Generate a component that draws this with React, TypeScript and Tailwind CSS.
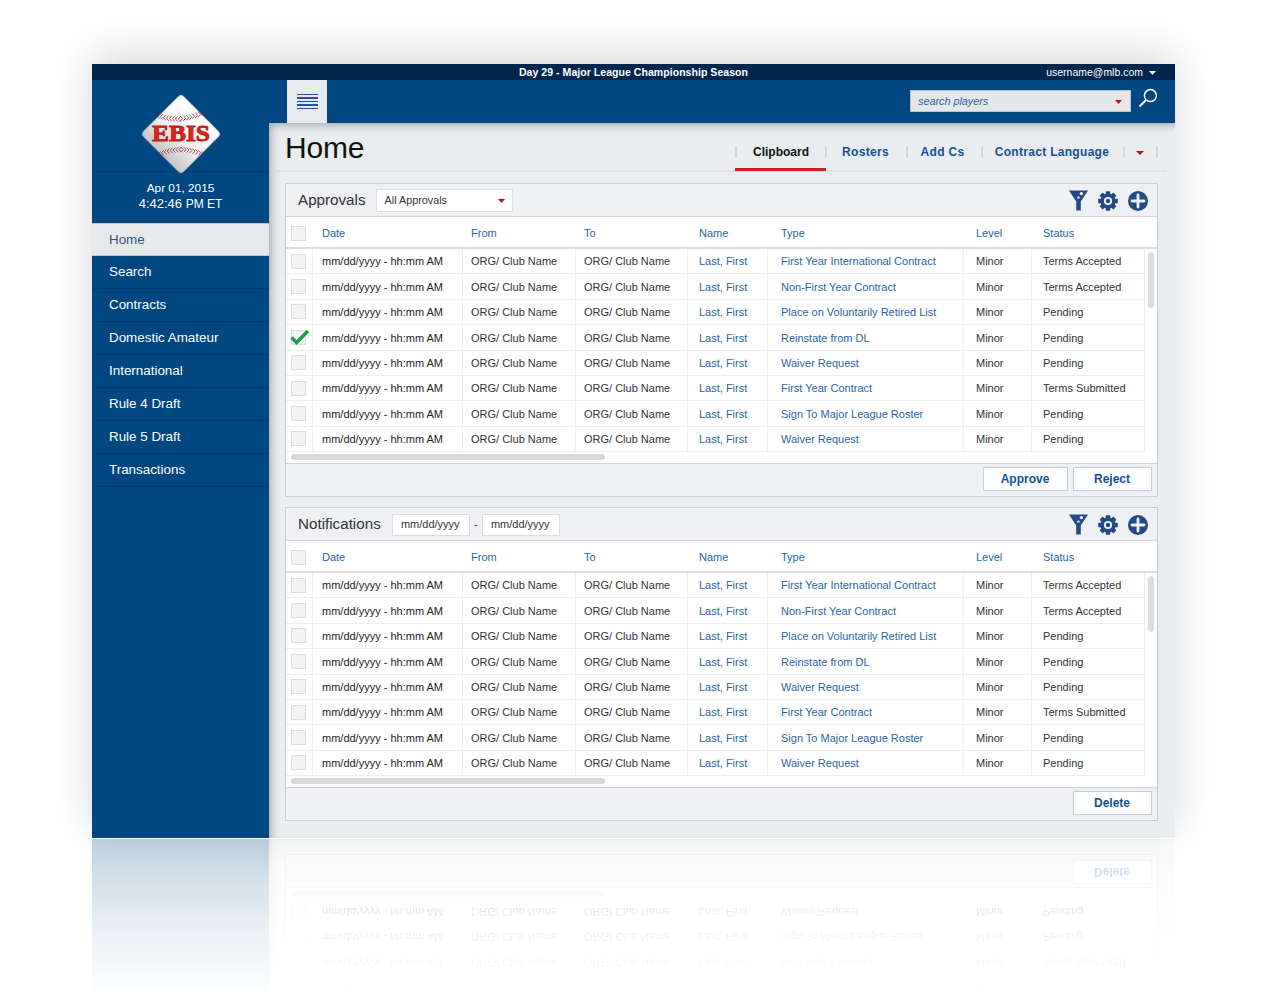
import React from "react";

const FONT = "[font-family:'Liberation_Sans',Arial,sans-serif]";

const rows: [string, string, string][] = [
  ["First Year International Contract", "Minor", "Terms Accepted"],
  ["Non-First Year Contract", "Minor", "Terms Accepted"],
  ["Place on Voluntarily Retired List", "Minor", "Pending"],
  ["Reinstate from DL", "Minor", "Pending"],
  ["Waiver Request", "Minor", "Pending"],
  ["First Year Contract", "Minor", "Terms Submitted"],
  ["Sign To Major League Roster", "Minor", "Pending"],
  ["Waiver Request", "Minor", "Pending"],
];

const GRID = "grid grid-cols-[26px_150px_113px_112px_80px_196px_68px_114px]";

function stitches(x0: number, cy: number, x1: number, y0: number, y1: number) {
  const out: React.ReactElement[] = [];
  const n = 16;
  for (let i = 0; i < n; i++) {
    const t = i / (n - 1);
    const x = x0 + (x1 - x0) * t;
    const y = (1 - t) * (1 - t) * y0 + 2 * t * (1 - t) * cy + t * t * y1;
    const dir = t < 0.5 ? -1 : 1;
    out.push(
      <path
        key={i}
        d={`M${x - 1.7 * dir} ${y - 2.6} L${x + 0.6 * dir} ${y} L${x - 1.7 * dir} ${y + 2.6}`}
        fill="none"
        stroke="#96283a"
        strokeWidth="0.8"
      />
    );
  }
  return out;
}

function Logo() {
  return (
    <svg width="84" height="84" viewBox="0 0 84 84" className="block">
      <defs>
        <linearGradient id="ebisd" x1="0" y1="0" x2="0" y2="1">
          <stop offset="0" stopColor="#ffffff" />
          <stop offset="0.55" stopColor="#f1f1f1" />
          <stop offset="1" stopColor="#c4c4c4" />
        </linearGradient>
      </defs>
      <g transform="rotate(45 42 42)">
        <rect x="13.5" y="13.5" width="57" height="57" rx="4" fill="url(#ebisd)" stroke="#8da4bb" strokeWidth="0.6" />
      </g>
      {stitches(19, 31, 64, 24, 21)}
      {stitches(20, 53, 64, 62, 62)}
      <text
        x="42"
        y="49"
        textAnchor="middle"
        textLength="58"
        lengthAdjust="spacingAndGlyphs"
        fontFamily="'Liberation Serif', serif"
        fontWeight="700"
        fontSize="24"
        fill="#e0261a"
        stroke="#b81d13"
        strokeWidth="0.9"
      >
        EBIS
      </text>
    </svg>
  );
}

function Funnel() {
  return (
    <svg width="19" height="21" viewBox="0 0 19 21" className="block">
      <path d="M0 0.5 H19 L11.8 11.5 V20.5 H7.2 V11.5 Z" fill="#234a85" />
      <circle cx="12.4" cy="3.6" r="1.7" fill="#eef0f3" />
      <circle cx="9.4" cy="7.6" r="1.2" fill="#eef0f3" />
    </svg>
  );
}

function Gear() {
  const teeth = [0, 45, 90, 135];
  return (
    <svg width="20" height="20" viewBox="0 0 20 20" className="block">
      {teeth.map((a) => (
        <rect key={a} x="7.7" y="0.2" width="4.6" height="19.6" rx="0.8" fill="#234a85" transform={`rotate(${a} 10 10)`} />
      ))}
      <circle cx="10" cy="10" r="7.6" fill="#234a85" />
      <circle cx="10" cy="10" r="4.1" fill="#eef0f3" />
      <circle cx="10" cy="10" r="2.2" fill="#234a85" />
    </svg>
  );
}

function PlusCircle() {
  return (
    <svg width="20" height="20" viewBox="0 0 20 20" className="block">
      <circle cx="10" cy="10" r="10" fill="#234a85" />
      <path d="M10 4 V16 M4 10 H16" stroke="#eef0f3" strokeWidth="2.8" strokeLinecap="round" />
    </svg>
  );
}

function Caret({ color = "#c8100f", w = 8, h = 4 }: { color?: string; w?: number; h?: number }) {
  return (
    <svg width={w} height={h} viewBox="0 0 8 4" className="block" preserveAspectRatio="none">
      <path d="M0 0 H8 L4 4 Z" fill={color} />
    </svg>
  );
}

function Checkbox({ checked }: { checked?: boolean }) {
  return (
    <div className="relative h-[15px] w-[15px] border border-[#dcdddf] bg-[#f1f2f3]">
      {checked && (
        <svg width="20" height="16" viewBox="0 0 20 16" className="absolute -top-[2px] -left-[2px]">
          <path d="M1.5 8.5 L6.5 13.5 L18 2" fill="none" stroke="#16a04a" strokeWidth="3.4" />
        </svg>
      )}
    </div>
  );
}

function Table({ checkedRow }: { checkedRow?: number }) {
  const heads = ["Date", "From", "To", "Name", "Type", "Level", "Status"];
  const headPads = ["pl-[10px]", "pl-[9px]", "pl-[9px]", "pl-[12px]", "pl-[14px]", "pl-[13px]", "pl-[12px]"];
  const pads = ["pl-[9px]", "pl-[8px]", "pl-[8px]", "pl-[11px]", "pl-[13px]", "pl-[12px]", "pl-[11px]"];
  const cell = "flex items-center border-l border-[#eeeeee] pt-[1px] whitespace-nowrap";
  return (
    <div className="relative bg-white">
      <div className={`${GRID} h-[32px] items-center border-b-2 border-[#dddee0] pt-[2px] text-[11px] text-[#2a63a8]`}>
        <div className="pl-[5px]">
          <Checkbox />
        </div>
        {heads.map((h, i) => (
          <div key={h} className={headPads[i]}>
            {h}
          </div>
        ))}
      </div>
      <div className="h-[203px] w-[859px]">
        {rows.map((r, i) => (
          <div key={i} className={`${GRID} h-[25.4px] border-r border-b border-[#eeeeee] text-[11px]`}>
            <div className="flex items-center pl-[5px]">
              <Checkbox checked={checkedRow === i} />
            </div>
            <div className={`${cell} ${pads[0]} text-[#222222]`}>mm/dd/yyyy - hh:mm AM</div>
            <div className={`${cell} ${pads[1]} text-[#333333]`}>ORG/ Club Name</div>
            <div className={`${cell} ${pads[2]} text-[#333333]`}>ORG/ Club Name</div>
            <div className={`${cell} ${pads[3]} text-[#2a63a8]`}>Last, First</div>
            <div className={`${cell} ${pads[4]} text-[#2a63a8]`}>{r[0]}</div>
            <div className={`${cell} ${pads[5]} text-[#333333]`}>{r[1]}</div>
            <div className={`${cell} ${pads[6]} text-[#333333]`}>{r[2]}</div>
          </div>
        ))}
      </div>
      <div className="flex h-[11px] items-start pt-[2px] pl-[5px]">
        <div className="h-[6px] w-[314px] rounded-full bg-[#d9d9d9]" />
      </div>
      <div className="absolute top-[35px] right-[3px] h-[56px] w-[6px] rounded-full bg-[#dcdcdc]" />
    </div>
  );
}

function FooterButton({ label, w }: { label: string; w: string }) {
  return (
    <button className={`h-[24px] ${w} border border-[#bcd3e6] bg-white pr-[1px] text-[12px] font-bold text-[#12509a]`}>
      {label}
    </button>
  );
}

function Panel({ title, control, buttons, checkedRow }: { title: string; control: React.ReactNode; buttons: React.ReactNode; checkedRow?: number }) {
  return (
    <div className="h-[314px] w-[873px] border border-[#c9ccd0] bg-[#eef0f3]">
      <div className="flex h-[33px] items-center border-b border-[#d6d8db] pt-[1px] pl-[12px]">
        <div className="mr-[10px] text-[15.2px] text-[#333333]">{title}</div>
        {control}
        <div className="ml-auto flex items-center gap-[10px] pr-[9px]">
          <Funnel />
          <Gear />
          <PlusCircle />
        </div>
      </div>
      <Table checkedRow={checkedRow} />
      <div className="flex h-[33px] items-center justify-end gap-[5px] border-t border-[#d3d5d8] pr-[5px] pb-[2px]">{buttons}</div>
    </div>
  );
}

const navItems = ["Search", "Contracts", "Domestic Amateur", "International", "Rule 4 Draft", "Rule 5 Draft", "Transactions"];

function Sidebar() {
  return (
    <div className="flex w-[177px] shrink-0 flex-col bg-[#004782] text-white">
      <div className="flex h-[92px] justify-center border-b border-[#003c70] pt-[12px]">
        <Logo />
      </div>
      <div className="flex h-[51px] flex-col items-center pt-[8px] text-center">
        <div className="text-[11.8px] leading-[16px]">Apr 01, 2015</div>
        <div className="text-[13px] leading-[15px]">
          4:42:46 <span className="text-[12px]">PM ET</span>
        </div>
      </div>
      <div className="flex h-[33px] items-center border-y border-[#b9c4cf] bg-[#e7e8ea] pl-[17px] text-[13.4px] leading-[16px] text-[#33557d]">Home</div>
      {navItems.map((n) => (
        <div key={n} className="flex h-[33px] items-center border-b border-[#003c70] pl-[17px] text-[13.4px] text-white">
          {n}
        </div>
      ))}
    </div>
  );
}

function Tabs() {
  const tabs = [
    ["Clipboard", "w-[88px] tracking-[0px]"],
    ["Rosters", "w-[79px] pr-[2px] tracking-[0.3px]"],
    ["Add Cs", "w-[73px] pr-[4px] tracking-[0.3px]"],
    ["Contract Language", "w-[140px] pr-[2px] tracking-[0.3px]"],
  ];
  const Sep = () => <div className="mt-[3px] h-[12px] w-[2px] bg-[#d3d7db]" />;
  return (
    <div className="flex items-center pt-[7px]">
      <Sep />
      {tabs.map(([t, w], i) => (
        <React.Fragment key={t}>
          <div className={`relative flex h-[16px] ${w} items-center justify-center pt-[3px] text-[12px] font-bold ${i === 0 ? "text-[#111111]" : "text-[#12509a]"}`}>
            {t}
            {i === 0 && <div className="absolute -left-[2px] top-[26px] h-[3px] w-[91px] bg-[#c8261f]" />}
          </div>
          <Sep />
        </React.Fragment>
      ))}
      <div className="flex h-[16px] w-[31px] items-center justify-center pt-[5px] pr-[2px]">
        <Caret />
      </div>
      <Sep />
    </div>
  );
}

function Content() {
  return (
    <div className="flex-1 bg-[#e9edf0] pr-[17px] pl-[16px] shadow-[inset_9px_9px_9px_-7px_rgba(0,0,0,0.3)]">
      <div className="-mr-[9px] -ml-[8px] flex h-[49px] items-center justify-between border-b-2 border-[#dde1e4] pr-[9px] pl-[8px]">
        <div className="pt-[2px] text-[30px] leading-none tracking-[-0.2px] text-[#111111]">Home</div>
        <Tabs />
      </div>
      <div className="mt-[11px] flex flex-col gap-[10px]">
        <Panel
          title="Approvals"
          checkedRow={3}
          control={
            <div className="flex h-[23px] w-[137px] items-center justify-between border border-[#dcdfe2] bg-white pr-[7px] pl-[8px] text-[10.8px] text-[#333333]">
              All Approvals
              <Caret w={7} h={4} />
            </div>
          }
          buttons={
            <>
              <FooterButton label="Approve" w="w-[85px]" />
              <FooterButton label="Reject" w="w-[79px]" />
            </>
          }
        />
        <Panel
          title="Notifications"
          control={
            <div className="ml-[1px] flex items-center text-[11px] text-[#333333]">
              <div className="flex h-[22px] w-[78px] items-center justify-center border border-[#dcdfe2] bg-white pr-[1px]">mm/dd/yyyy</div>
              <div className="w-[12px] text-center">-</div>
              <div className="flex h-[22px] w-[78px] items-center justify-center border border-[#dcdfe2] bg-white pr-[1px]">mm/dd/yyyy</div>
            </div>
          }
          buttons={<FooterButton label="Delete" w="w-[79px]" />}
        />
      </div>
    </div>
  );
}

function Header() {
  return (
    <div className="flex h-[43px] items-start bg-[#004782]">
      <div className="ml-[18px] flex h-[43px] w-[40px] flex-col items-center justify-center gap-[2px] bg-[#e8e9eb]">
        {[0, 1, 2, 3, 4].map((i) => (
          <div key={i} className="h-[1.5px] w-[21px] bg-[#1a55ad]" />
        ))}
      </div>
      <div className="mt-[10px] ml-auto flex h-[22px] w-[221px] items-center justify-between border border-[#b7c6d6] bg-[#e6e7e9] pt-[1px] pr-[8px] pl-[7px] text-[10.8px] text-[#2a63a8] italic">
        search players
        <Caret w={7} h={4} />
      </div>
      <div className="mt-[8px] mr-[17px] ml-[7px]">
        <svg width="20" height="20" viewBox="0 0 20 20" className="block">
          <circle cx="12.4" cy="7.6" r="6" fill="none" stroke="#ffffff" strokeWidth="1.5" />
          <path d="M8 12 L1.5 18.5" stroke="#ffffff" strokeWidth="2" />
        </svg>
      </div>
    </div>
  );
}

function Window({ shadow }: { shadow?: boolean }) {
  return (
    <div className={`flex h-[774px] w-[1083px] flex-col ${FONT} ${shadow ? "shadow-[0_-10px_40px_rgba(0,0,0,0.16)]" : ""}`}>
      <div className="relative flex h-[16px] shrink-0 items-center justify-center bg-[#00264d] pt-[1px] text-[10.5px] font-bold tracking-[0.05px] text-white">
        Day 29 - Major League Championship Season
        <div className="absolute top-[1px] right-[19px] flex h-[16px] items-center gap-[6px]">
          <span className="text-[10.4px] font-normal">username@mlb.com</span>
          <Caret color="#ffffff" w={7} h={4} />
        </div>
      </div>
      <div className="flex min-h-0 flex-1">
        <Sidebar />
        <div className="flex flex-1 flex-col">
          <Header />
          <Content />
        </div>
      </div>
    </div>
  );
}

export default function App() {
  return (
    <div className="h-[1000px] w-[1280px] overflow-hidden bg-white pt-[64px] pl-[92px]">
      <Window shadow />
      <div className="relative h-[1px] w-[1083px] bg-white" />
      <div aria-hidden="true" className="h-[161px] w-[1083px] overflow-hidden [mask-image:linear-gradient(to_bottom,rgba(0,0,0,0.24),rgba(0,0,0,0.1)_50%,rgba(0,0,0,0.04)_78%,transparent)]">
        <div className="-mt-[2px] -scale-y-100">
          <Window />
        </div>
      </div>
    </div>
  );
}
